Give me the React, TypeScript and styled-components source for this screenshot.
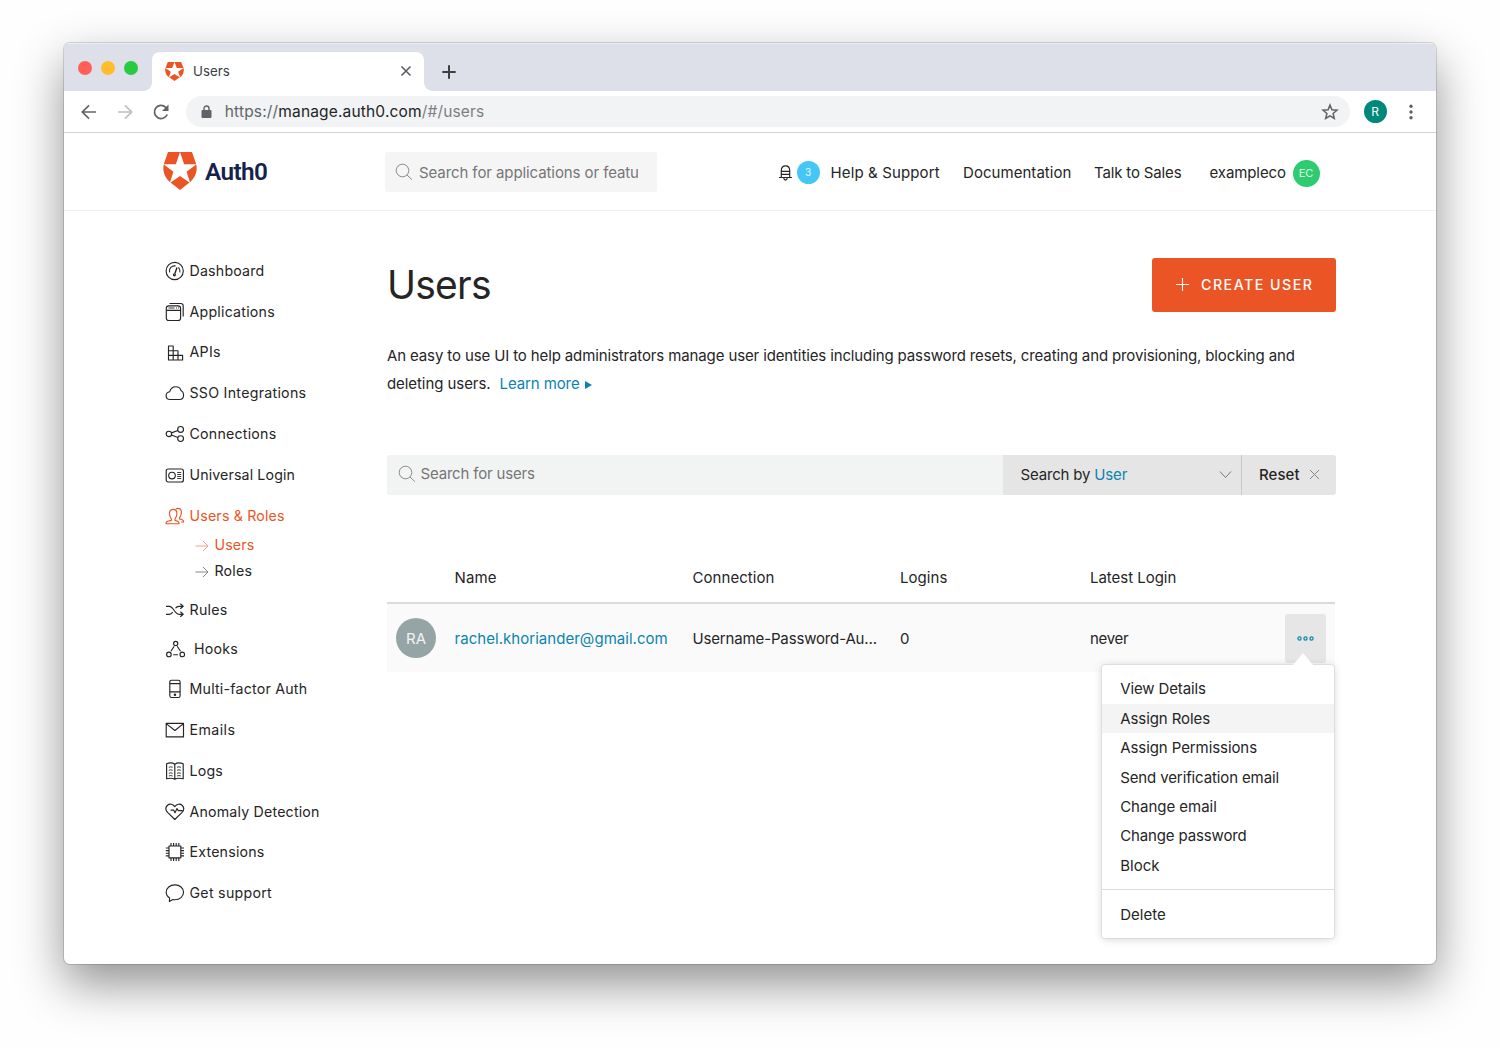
import React from "react";
import styled, { createGlobalStyle, css } from "styled-components";

const Global = createGlobalStyle`
  *, *::before, *::after { box-sizing: border-box; }
  html, body { margin: 0; background: #fefefe; }
  body {
    font-family: Inter, "Liberation Sans", sans-serif;
    font-size: 15px;
    color: #252526;
    width: 1500px;
    height: 1048px;
    overflow: hidden;
  }
  svg { display: block; flex: none; }
`;

const Desktop = styled.div`
  width: 1500px;
  height: 1048px;
  padding: 43px 64px 0;
`;

const Window = styled.div`
  width: 1372px;
  height: 921px;
  border-radius: 6px;
  overflow: hidden;
  background: #fff;
  display: flex;
  flex-direction: column;
  box-shadow: 0 0 0 1px rgba(0, 0, 0, 0.14), 0 20px 48px rgba(0, 0, 0, 0.43);
`;

/* Text with tracking adjusted per string */
const T = styled.span<{ $ls?: number }>`
  letter-spacing: ${(p) => p.$ls ?? 0}px;
  white-space: nowrap;
`;

/* ---------- Browser chrome ---------- */
const TabStrip = styled.div`
  height: 48px;
  flex: none;
  background: #dde0e8;
  border-top: 1px solid #eceef2;
  display: flex;
  align-items: flex-end;
  padding-left: 14px;
`;
const Lights = styled.div`
  display: flex;
  gap: 9px;
  width: 74px;
  height: 46px;
`;
const Light = styled.i<{ $color: string }>`
  width: 14px;
  height: 14px;
  margin-top: 16px;
  border-radius: 50%;
  background: ${(p) => p.$color};
`;
const Tab = styled.div`
  position: relative;
  width: 272px;
  height: 39px;
  border-radius: 8px 8px 0 0;
  background: #fff;
  display: flex;
  align-items: center;
  padding: 0 12px 1px 13px;
  font-size: 13.3px;
  color: #3c4043;
  &::before,
  &::after {
    content: "";
    position: absolute;
    bottom: 0;
    width: 8px;
    height: 8px;
  }
  &::before {
    left: -8px;
    background: radial-gradient(circle at 0 0, transparent 7.5px, #fff 8px);
  }
  &::after {
    right: -8px;
    background: radial-gradient(circle at 100% 0, transparent 7.5px, #fff 8px);
  }
`;
const TabTitle = styled.span`
  flex: 1;
  margin-left: 9px;
`;
const NewTab = styled.div`
  height: 39px;
  padding: 0 0 0 18px;
  display: flex;
  align-items: center;
`;
const Toolbar = styled.div`
  height: 42px;
  flex: none;
  border-bottom: 1px solid #d2d2d2;
  display: flex;
  align-items: center;
  padding: 0 17px 0 15px;
`;
const NavIcons = styled.div`
  display: flex;
  gap: 16.2px;
  width: 107px;
`;
const Omnibox = styled.div`
  flex: 1;
  height: 31px;
  border-radius: 16px;
  background: #f1f3f4;
  display: flex;
  align-items: center;
  padding: 0 11px 0 15px;
  font-size: 15.5px;
  letter-spacing: 0.16px;
  color: #7c8084;
`;
const Url = styled.span`
  flex: 1;
  margin-left: 12.8px;
  white-space: nowrap;
  b {
    font-weight: 400;
    color: #222426;
  }
  i {
    font-style: normal;
    color: #62666a;
  }
`;
const Badge = styled.span<{ $size: number; $bg: string; $font: number; $ink?: string }>`
  width: ${(p) => p.$size}px;
  height: ${(p) => p.$size}px;
  border-radius: 50%;
  background: ${(p) => p.$bg};
  color: ${(p) => p.$ink ?? "#fff"};
  font-size: ${(p) => p.$font}px;
  display: flex;
  flex: none;
  align-items: center;
  justify-content: center;
`;
const ProfileSlot = styled.div`
  display: flex;
  align-items: center;
  gap: 16.5px;
  margin-left: 13.5px;
`;

/* ---------- App header ---------- */
const Header = styled.header`
  height: 78px;
  flex: none;
  border-bottom: 1px solid #efefef;
  display: flex;
  align-items: center;
  padding: 0 116.5px 0 99px;
`;
const Brand = styled.div`
  display: flex;
  align-items: center;
  width: 222px;
  height: 40px;
  padding-bottom: 2px;
  gap: 8px;
  font-family: Roboto, "Liberation Sans", sans-serif;
  font-weight: 600;
  font-size: 24.3px;
  color: #16214d;
`;
const BrandName = styled(T)`
  padding-top: 1px;
`;
const GlobalSearch = styled.div`
  width: 272px;
  height: 40px;
  background: #f5f5f5;
  border-radius: 3px;
  display: flex;
  align-items: center;
  padding: 0 19px 0 10px;
  color: #757577;
  gap: 6px;
`;
const Clip = styled.span`
  flex: 1;
  height: 22px;
  line-height: 22px;
  margin-top: 2px;
  overflow: hidden;
  white-space: nowrap;
`;
const TopNav = styled.nav`
  flex: 1;
  display: flex;
  align-items: center;
  justify-content: flex-end;
  padding-top: 3px;
`;
const TopLink = styled.span<{ $w: number; $ls?: number }>`
  width: ${(p) => p.$w}px;
  margin-top: -1px;
  letter-spacing: ${(p) => p.$ls ?? 0}px;
  white-space: nowrap;
`;
const Bell = styled.div`
  display: flex;
  align-items: center;
  gap: 4px;
  margin: -2px 11px 0 0;
  svg { margin-top: 2px; }
`;

/* ---------- Body ---------- */
const Body = styled.div`
  flex: 1;
  display: flex;
  padding-left: 101px;
`;
const Sidebar = styled.aside`
  width: 222px;
  padding-top: 39px;
  font-size: 14.2px;
`;
const NavItem = styled.div<{ $h?: number; $active?: boolean; $gap?: number }>`
  height: ${(p) => p.$h ?? 40.8}px;
  display: flex;
  align-items: center;
  gap: ${(p) => p.$gap ?? 4.5}px;
  color: ${(p) => (p.$active ? "#eb5424" : "#252526")};
  svg { margin-top: 1px; }
`;
const SubList = styled.div`
  margin: -4px 0 6.3px 29.5px;
`;
const SubItem = styled.div<{ $active?: boolean }>`
  height: 26.2px;
  display: flex;
  align-items: center;
  gap: 6px;
  color: ${(p) => (p.$active ? "#eb5424" : "#252526")};
  svg { opacity: 0.55; margin-top: 2px; }
`;

const Main = styled.main`
  width: 949px;
  padding-top: 47px;
`;
const TitleRow = styled.div`
  display: flex;
  justify-content: space-between;
  align-items: center;
  height: 54px;
`;
const Title = styled.h1`
  margin: 0;
  padding-bottom: 2px;
  font-size: 39px;
  font-weight: 400;
  letter-spacing: -0.75px;
`;
const CreateButton = styled.button`
  width: 184.5px;
  height: 54px;
  border: 0;
  border-radius: 3px;
  background: #eb5424;
  color: #fff;
  font-family: inherit;
  font-size: 14.2px;
  font-weight: 500;
  letter-spacing: 1.5px;
  display: flex;
  align-items: center;
  gap: 12.5px;
  padding: 0 0 2px 24px;
  svg { margin-top: 1px; }
`;
const Intro = styled.p`
  margin: 30px 0 0;
  line-height: 28.4px;
`;
const Learn = styled.a`
  color: #0a84ae;
  margin-left: 9px;
`;
const Caret = styled.i`
  display: inline-block;
  margin-left: 5.5px;
  border-left: 7px solid #0a84ae;
  border-top: 4.5px solid transparent;
  border-bottom: 4.5px solid transparent;
`;
const Filter = styled.div`
  display: flex;
  height: 39.5px;
  margin-top: 56.2px;
  border-radius: 3px;
  overflow: hidden;
  background: #e5e5e5;
`;
const FilterInput = styled.div`
  width: 616px;
  background: #f2f4f4;
  display: flex;
  align-items: center;
  gap: 4.5px;
  padding: 0 0 2px 11px;
  color: #757577;
  svg { margin-top: 1px; }
`;
const FilterBy = styled.div`
  width: 239px;
  border-right: 1px solid #c8c8c8;
  display: flex;
  align-items: center;
  justify-content: space-between;
  padding: 0 9.5px 1px 17.5px;
  em {
    font-style: normal;
    color: #0a84ae;
  }
`;
const Reset = styled.div`
  flex: 1;
  display: flex;
  align-items: center;
  gap: 9px;
  padding: 0 0 1px 17px;
  font-weight: 500;
`;

const columns = css`
  display: grid;
  grid-template-columns: 67.5px 238px 207.5px 190px 195px 50px;
  align-items: center;
`;
const TableHead = styled.div`
  ${columns}
  width: 948px;
  height: 52px;
  margin-top: 57.8px;
  border-bottom: 2px solid #dadada;
`;
const TableRow = styled.div`
  ${columns}
  width: 948px;
  height: 68px;
  background: #fafafa;
`;
const AvatarCell = styled.div`
  padding-left: 9px;
`;
const Mail = styled(T)`
  color: #0a84ae;
`;
const Actions = styled.div`
  position: relative;
  width: 41px;
  height: 49px;
  margin-top: 1px;
  border-radius: 3px;
  background: #e6e6e6;
  display: flex;
  align-items: center;
  justify-content: center;
`;
const Menu = styled.div`
  position: absolute;
  top: 51px;
  right: -8px;
  width: 232px;
  height: 273px;
  padding: 9px 0;
  background: #fff;
  border-radius: 3px;
  box-shadow: 0 0 0 1px rgba(0, 0, 0, 0.05), 0 1px 9px rgba(0, 0, 0, 0.18);
  &::before {
    content: "";
    position: absolute;
    top: -12px;
    right: 21px;
    border: 10px solid transparent;
    border-top: 0;
    border-bottom: 12px solid #fff;
  }
`;
const MenuItem = styled.div<{ $hover?: boolean; $ls?: number }>`
  height: 29.45px;
  line-height: 29.45px;
  padding-left: 18.2px;
  letter-spacing: ${(p) => p.$ls ?? 0}px;
  background: ${(p) => (p.$hover ? "#f4f4f4" : "transparent")};
`;
const MenuRule = styled.div`
  height: 1px;
  margin: 8.8px 0 9.5px;
  background: #dedede;
`;

/* ---------- Drawings ---------- */
const Shield = ({ w, h }: { w: number; h: number }) => (
  <svg width={w} height={h} viewBox="0 0 34 38" preserveAspectRatio="none">
    <path
      fill="#eb5424"
      d="M5 0H29L33 11.5C35 18.5 32.5 26 26.5 30.5L17 38L7.500 30.500C1.500 26 -1 18.500 1 11.500Z"
    />
    <path
      fill="#fff"
      d="M17 0L21.100 12.200H33.400L23.600 19.700L27.200 31L17 24L6.800 31L10.400 19.700L.6 12.200H12.900Z"
    />
  </svg>
);

const Magnifier = ({ size }: { size: number }) => (
  <svg width={size} height={size} viewBox="0 0 18 18" fill="none" stroke="#8c8c8e" strokeWidth="1">
    <circle cx="7.500" cy="7.500" r="6.300" />
    <path d="M12 12L17 16.700" />
  </svg>
);

const iconPaths: Record<string, React.ReactNode> = {
  dashboard: (
    <>
      <circle cx="9.700" cy="10" r="8.600" />
      <path d="M4.500 11.300A5.300 5.300 0 0 1 10.600 4.900M13.400 6.400A5.300 5.300 0 0 1 14.900 11.300" />
      <path d="M12 6.600L9.900 12.600" strokeWidth="1.400" />
      <circle cx="9.400" cy="13.800" r="1" />
    </>
  ),
  applications: (
    <>
      <rect x="1.300" y="3.800" width="14.300" height="14.700" rx="2.500" />
      <path d="M1.300 8.300H15.600M4.500 1.500H15.700Q18.200 1.500 18.200 4V14.500" />
      <path d="M3.500 6H9.500M11 6H12M13 6H14" strokeWidth=".9" />
    </>
  ),
  apis: <path d="M3.500 4H8.200V18H3.500ZM3.500 8.700H13V18H3.500M3.500 13.400H17.600V18H13" />,
  cloud: (
    <path d="M5.200 16.500C2.800 16.500 1.100 15 1.100 12.700C1.100 10.500 2.600 9 4.700 8.700C5.600 5.600 7.700 3.700 10.800 3.700C13.400 3.700 15.400 5.100 16.100 7.600C17.700 8.500 18.600 10 18.600 11.900C18.600 14.700 16.800 16.500 14.300 16.500Z" />
  ),
  connections: (
    <>
      <circle cx="3.900" cy="9.900" r="2.700" />
      <circle cx="15.600" cy="5.400" r="2.900" />
      <circle cx="15.600" cy="14.600" r="2.900" />
      <path d="M6.500 8.900L12.900 6.500M6.500 11L12.900 13.500" />
    </>
  ),
  universal: (
    <>
      <rect x="1.200" y="4" width="17.200" height="13" rx="2" />
      <circle cx="7" cy="10.500" r="3.300" />
      <path d="M12.200 7.500H16.200M12.200 9.500H16.200M12.200 11.500H16.200M12.200 13.500H16.200" strokeWidth=".9" />
    </>
  ),
  users: (
    <>
      <path d="M6.400 14.400C6.700 13.600 6.500 12.900 6 12.300C5 11.100 4.500 9.600 4.500 7.600C4.500 5 6.100 3.400 8.200 3.400C10.300 3.400 11.900 5 11.900 7.600C11.900 9.600 11.400 11.100 10.400 12.300C9.900 12.900 9.700 13.600 10 14.400L12.800 15.300C13.800 15.700 14.100 16.500 14.100 17.700H1C1 16.500 1.600 15.700 2.600 15.300Z" />
      <path d="M10.800 3.100C11.400 2.600 12.200 2.300 13 2.300C15 2.300 16.400 3.900 16.400 6.300C16.400 8.300 15.900 9.600 15 10.800C14.400 11.600 14.400 12.400 14.700 12.900L17.200 13.800C18.200 14.200 18.600 14.900 18.600 16H16.200" />
    </>
  ),
  rules: (
    <>
      <path d="M1 6.300H4.300C8.700 6.300 9.500 14.300 14 14.300H18M1 14.300H4.300C6 14.300 7 13.200 7.700 12.200M10.500 8.300C11.300 7.100 12.300 6.300 14 6.300H18" />
      <path d="M15.300 3.800L18.200 6.300L15.300 8.800M15.300 11.800L18.200 14.300L15.300 16.800" />
    </>
  ),
  hooks: (
    <>
      <circle cx="10.700" cy="4.400" r="2.100" />
      <circle cx="3.900" cy="15.400" r="2.300" />
      <circle cx="17.300" cy="15.400" r="2.300" />
      <path d="M9.200 7.200L5.900 12.200M12.200 7.200L15.500 12.200M8.200 15.700H13" />
    </>
  ),
  mfa: (
    <>
      <rect x="4.800" y="1.200" width="10.300" height="17.300" rx="1.800" />
      <path d="M4.800 4.600H15.100M4.800 12.900H15.100" />
      <circle cx="9.950" cy="15.700" r=".7" />
    </>
  ),
  emails: <path d="M1.200 3.400H18.500V16.900H1.200ZM1.200 3.600L9.900 10.500L18.500 3.600" />,
  logs: (
    <>
      <path d="M9.800 3.200V18.300M1.600 17.800V2.800C4.500 1.500 7.500 1.700 9.800 3.200C12 1.700 15 1.500 18.200 2.800V17.800C15 17 12 17 9.800 18.300C7.500 17 4.500 17 1.600 17.800Z" />
      <path
        d="M3.800 6.300Q5.700 5.300 7.600 6.300M3.800 9.300Q5.700 8.300 7.600 9.300M3.800 12.300Q5.700 11.300 7.600 12.300M3.800 15Q5.700 14 7.600 15M12 6.300Q14 5.300 15.900 6.300M12 9.300Q14 8.300 15.900 9.300M12 12.300Q14 11.300 15.900 12.300M12 15Q14 14 15.900 15"
        strokeWidth=".9"
      />
    </>
  ),
  anomaly: (
    <>
      <path d="M9.800 17.500L2.800 10.700C.4 8.200.5 5.400 2.300 3.500C4.500 1.400 7.900 1.900 9.800 4.600C11.700 1.900 15.100 1.400 17.300 3.500C19.100 5.400 19.200 8.200 16.800 10.700Z" />
      <path d="M5.600 8.100H8.600L10 10.700L12 6.500L13.300 8.600H17.700" />
    </>
  ),
  extensions: (
    <>
      <rect x="4" y="4" width="11.800" height="11.800" />
      <path d="M6 4V1M8.600 4V1M11.200 4V1M13.800 4V1M6 16V19M8.600 16V19M11.200 16V19M13.800 16V19M4 6H.8M4 8.600H.8M4 11.200H.8M4 13.800H.8M16 6H19M16 8.600H19M16 11.200H19M16 13.800H19" />
    </>
  ),
  support: (
    <path d="M4.400 18.400L4.600 14.900C2.400 13.600 1.200 11.600 1.200 9.300C1.200 5.100 5 1.900 9.900 1.900C14.800 1.900 18.500 5.100 18.500 9.300C18.500 13.500 14.800 16.700 9.900 16.700C9.200 16.700 8.500 16.600 7.900 16.500Z" />
  ),
};

const Icon = ({ name }: { name: string }) => (
  <svg
    width="20"
    height="20"
    viewBox="0 0 20 20"
    fill="none"
    stroke="currentColor"
    strokeWidth="1.15"
    strokeLinejoin="round"
  >
    {iconPaths[name]}
  </svg>
);

const SubArrow = () => (
  <svg width="14" height="12" viewBox="0 0 14 12" fill="none" stroke="currentColor" strokeWidth="1">
    <path d="M.5 6H13M8 1L13 6L8 11" />
  </svg>
);

type Entry = { icon: string; label: string; h?: number; ls?: number; gap?: number };

const upper: Entry[] = [
  { icon: "dashboard", label: "Dashboard", ls: 0.2 },
  { icon: "applications", label: "Applications", ls: 0.22 },
  { icon: "apis", label: "APIs", ls: 0.3 },
  { icon: "cloud", label: "SSO Integrations", ls: 0.27 },
  { icon: "connections", label: "Connections", ls: 0.22 },
  { icon: "universal", label: "Universal Login", ls: 0.13 },
];
const lower: Entry[] = [
  { icon: "rules", label: "Rules", h: 39, ls: 0.25 },
  { icon: "hooks", label: "Hooks", h: 39, ls: 0.2, gap: 9 },
  { icon: "mfa", label: "Multi-factor Auth", ls: 0.22 },
  { icon: "emails", label: "Emails", ls: 0.42 },
  { icon: "logs", label: "Logs", ls: 0.2 },
  { icon: "anomaly", label: "Anomaly Detection", ls: 0.19 },
  { icon: "extensions", label: "Extensions", ls: 0.2 },
  { icon: "support", label: "Get support", ls: 0.28 },
];
const actions: { label: string; ls?: number }[] = [
  { label: "View Details", ls: -0.12 },
  { label: "Assign Roles", ls: -0.08 },
  { label: "Assign Permissions", ls: -0.08 },
  { label: "Send verification email", ls: -0.12 },
  { label: "Change email", ls: -0.02 },
  { label: "Change password", ls: -0.14 },
  { label: "Block" },
];

const NavEntry = ({ e }: { e: Entry }) => (
  <NavItem $h={e.h} $gap={e.gap}>
    <Icon name={e.icon} />
    <T $ls={e.ls}>{e.label}</T>
  </NavItem>
);

const BrowserChrome = () => (
  <>
    <TabStrip>
      <Lights>
        <Light $color="#ff5f57" />
        <Light $color="#ffbd2e" />
        <Light $color="#28ca41" />
      </Lights>
      <Tab>
        <Shield w={19} h={19} />
        <TabTitle>Users</TabTitle>
        <svg width="12" height="12" viewBox="0 0 12 12" stroke="#5a5e62" strokeWidth="1.600">
          <path d="M1.500 1.500L10.500 10.500M10.500 1.500L1.500 10.500" />
        </svg>
      </Tab>
      <NewTab>
        <svg width="14" height="14" viewBox="0 0 14 14" stroke="#3c4043" strokeWidth="2">
          <path d="M7 .3V13.700M.3 7H13.700" />
        </svg>
      </NewTab>
    </TabStrip>
    <Toolbar>
      <NavIcons>
        <svg width="20" height="20" viewBox="0 0 20 20" fill="none" stroke="#5f6368" strokeWidth="1.700">
          <path d="M17 10H3.500M10 3.300L3.300 10L10 16.700" />
        </svg>
        <svg width="20" height="20" viewBox="0 0 20 20" fill="none" stroke="#bdbfc2" strokeWidth="1.700">
          <path d="M3 10H16.500M10 3.300L16.700 10L10 16.700" />
        </svg>
        <svg width="20" height="20" viewBox="0 0 20 20" fill="none" stroke="#5f6368" strokeWidth="1.800">
          <path d="M16.200 12.500A6.600 6.600 0 1 1 14.700 5.300L16.500 7.200" />
          <path d="M17.500 2.500V9H11Z" fill="#5f6368" stroke="none" />
        </svg>
      </NavIcons>
      <Omnibox>
        <svg width="11" height="14" viewBox="0 0 11 14" fill="none">
          <rect x=".5" y="5" width="10" height="8" rx="1" fill="#5f6368" />
          <path d="M3 5.500V3.500A2.500 2.500 0 0 1 8 3.500V5.500" stroke="#5f6368" strokeWidth="1.400" />
        </svg>
        <Url>
          <i>https://</i>
          <b>manage.auth0.com</b>/#/users
        </Url>
        <svg width="18" height="18" viewBox="0 0 18 18" fill="none" stroke="#5f6368" strokeWidth="1.500">
          <path d="M9 2L10.900 6.800L16 7.200L12.100 10.500L13.300 15.500L9 12.800L4.700 15.500L5.900 10.500L2 7.200L7.100 6.800Z" />
        </svg>
      </Omnibox>
      <ProfileSlot>
        <Badge $size={23} $bg="#00897b" $font={12}>R</Badge>
        <svg width="16" height="18" viewBox="0 0 16 18" fill="#5f6368">
          <circle cx="8" cy="3.300" r="1.700" />
          <circle cx="8" cy="9" r="1.700" />
          <circle cx="8" cy="14.700" r="1.700" />
        </svg>
      </ProfileSlot>
    </Toolbar>
  </>
);

export default function App() {
  return (
    <>
      <Global />
      <Desktop>
        <Window>
          <BrowserChrome />
          <Header>
            <Brand>
              <Shield w={34} h={38} />
              <BrandName $ls={-0.6}>Auth0</BrandName>
            </Brand>
            <GlobalSearch>
              <Magnifier size={18} />
              <Clip>
                <T $ls={-0.09}>Search for applications or features</T>
              </Clip>
            </GlobalSearch>
            <TopNav>
              <Bell>
                <svg width="15" height="16" viewBox="0 0 15 16" fill="none" stroke="#252526" strokeWidth="1.200">
                  <path d="M3.300 12V5.500C3.300 2.500 5 .8 7.500 .8C10 .8 11.700 2.500 11.700 5.500V12" />
                  <path d="M1 12.500H14M3.300 6.300H11.700M3.300 9.300H11.700M5.800 13C6 15.700 9 15.700 9.200 13" />
                </svg>
                <Badge $size={23} $bg="#44c7f4" $font={10} $ink="#e6f8fe">3</Badge>
              </Bell>
              <TopLink $w={132.5} $ls={0.13}>Help &amp; Support</TopLink>
              <TopLink $w={131} $ls={0.05}>Documentation</TopLink>
              <TopLink $w={115.5} $ls={-0.15}>Talk to Sales</TopLink>
              <TopLink $w={83} $ls={-0.1}>exampleco</TopLink>
              <Badge $size={27} $bg="#2ecc71" $font={11} $ink="#dcf8e7">EC</Badge>
            </TopNav>
          </Header>
          <Body>
            <Sidebar>
              {upper.map((e) => (
                <NavEntry key={e.label} e={e} />
              ))}
              <NavItem $active>
                <Icon name="users" />
                <T $ls={0.18}>Users &amp; Roles</T>
              </NavItem>
              <SubList>
                <SubItem $active>
                  <SubArrow />
                  <T $ls={0.15}>Users</T>
                </SubItem>
                <SubItem>
                  <SubArrow />
                  <T $ls={0.2}>Roles</T>
                </SubItem>
              </SubList>
              {lower.map((e) => (
                <NavEntry key={e.label} e={e} />
              ))}
            </Sidebar>
            <Main>
              <TitleRow>
                <Title>Users</Title>
                <CreateButton>
                  <svg width="13" height="13" viewBox="0 0 13 13" stroke="#fff" strokeWidth="1.100">
                    <path d="M6.500 0V13M0 6.500H13" />
                  </svg>
                  CREATE USER
                </CreateButton>
              </TitleRow>
              <Intro>
                <T $ls={-0.125}>
                  An easy to use UI to help administrators manage user identities including password resets, creating
                  and provisioning, blocking and
                </T>
                <br />
                <T $ls={-0.07}>deleting users.</T>
                <Learn>
                  <T $ls={-0.1}>Learn more</T>
                  <Caret />
                </Learn>
              </Intro>
              <Filter>
                <FilterInput>
                  <Magnifier size={18} />
                  <T $ls={-0.18}>Search for users</T>
                </FilterInput>
                <FilterBy>
                  <T $ls={-0.17}>
                    Search by <em>User</em>
                  </T>
                  <svg width="13" height="9" viewBox="0 0 13 9" fill="none" stroke="#77777b" strokeWidth="1">
                    <path d="M1 1.500L6.500 7.500L12 1.500" />
                  </svg>
                </FilterBy>
                <Reset>
                  <T $ls={0.05}>Reset</T>
                  <svg width="11" height="11" viewBox="0 0 11 11" stroke="#88888c" strokeWidth="1">
                    <path d="M1 1L10 10M10 1L1 10" />
                  </svg>
                </Reset>
              </Filter>
              <TableHead>
                <span />
                <T $ls={0.1}>Name</T>
                <T $ls={0.05}>Connection</T>
                <T $ls={0.05}>Logins</T>
                <T $ls={-0.03}>Latest Login</T>
              </TableHead>
              <TableRow>
                <AvatarCell>
                  <Badge $size={40} $bg="#95a5a6" $font={15} $ink="#f1f4f4">RA</Badge>
                </AvatarCell>
                <Mail $ls={0.04}>rachel.khoriander@gmail.com</Mail>
                <T $ls={-0.15}>Username-Password-Au...</T>
                <T>0</T>
                <T $ls={-0.3}>never</T>
                <Actions>
                  <svg width="17" height="5" viewBox="0 0 17 5" fill="none" stroke="#0a84ae" strokeWidth="1.200">
                    <circle cx="2.500" cy="2.500" r="1.600" />
                    <circle cx="8.500" cy="2.500" r="1.600" />
                    <circle cx="14.500" cy="2.500" r="1.600" />
                  </svg>
                  <Menu>
                    {actions.map((a) => (
                      <MenuItem key={a.label} $ls={a.ls} $hover={a.label === "Assign Roles"}>
                        {a.label}
                      </MenuItem>
                    ))}
                    <MenuRule />
                    <MenuItem>Delete</MenuItem>
                  </Menu>
                </Actions>
              </TableRow>
            </Main>
          </Body>
        </Window>
      </Desktop>
    </>
  );
}
